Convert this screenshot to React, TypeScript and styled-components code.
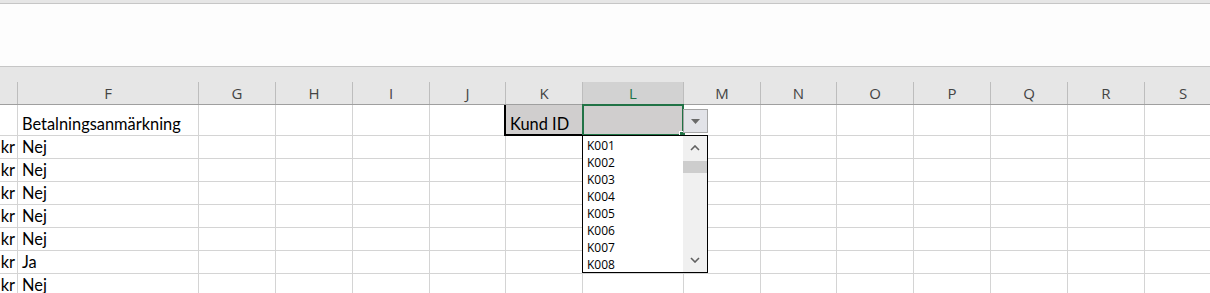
import React from "react";
import styled, { createGlobalStyle } from "styled-components";

const GlobalStyle = createGlobalStyle`
	html, body {
		margin: 0;
		padding: 0;
		background: #ffffff;
		overflow: hidden;
	}
	#root {
		width: 1210px;
		height: 293px;
		overflow: hidden;
	}
`;

const columns = [
	{ key: "E", width: 18 },
	{ key: "F", width: 181 },
	{ key: "G", width: 77 },
	{ key: "H", width: 77 },
	{ key: "I", width: 77 },
	{ key: "J", width: 76 },
	{ key: "K", width: 77 },
	{ key: "L", width: 101 },
	{ key: "M", width: 77 },
	{ key: "N", width: 76 },
	{ key: "O", width: 77 },
	{ key: "P", width: 77 },
	{ key: "Q", width: 77 },
	{ key: "R", width: 77 },
	{ key: "S", width: 77 }
];

const answers = ["Nej", "Nej", "Nej", "Nej", "Nej", "Ja", "Nej"];
const customers = ["K001", "K002", "K003", "K004", "K005", "K006", "K007", "K008"];

const Window = styled.div`
	width: 1210px;
	height: 293px;
	overflow: hidden;
	display: flex;
	flex-direction: column;
`;

const TopStrip = styled.div`
	flex: none;
	height: 3px;
	background: #e6e6e6;
	border-bottom: 1px solid #c6c6c6;
`;

const FormulaArea = styled.div`
	flex: none;
	height: 62px;
	background: #fdfdfd;
	border-bottom: 1px solid #c6c6c6;
`;

const Sheet = styled.div`
	display: grid;
	grid-template-columns: ${columns.map((c) => c.width + "px").join(" ")};
	grid-template-rows: 38px 31px;
	grid-auto-rows: 23px;
	font-family: Lato, "Noto Sans", sans-serif;
	font-size: 16.4px;
	color: #000;
`;

const HeaderCell = styled.div`
	background: #e6e6e6;
	border-bottom: 1px solid #9f9f9f;
	padding-top: 15px;
	box-sizing: border-box;
	display: flex;
`;

const HeaderLabel = styled.div<{ $active?: boolean }>`
	flex: 1;
	display: flex;
	align-items: center;
	justify-content: center;
	border-right: 1px solid #bdbdbd;
	background: ${(p) => (p.$active ? "#d2d2d2" : "transparent")};
	color: ${(p) => (p.$active ? "#217346" : "#444444")};
	font-family: "Open Sans", "Noto Sans", sans-serif;
	font-size: 15px;
`;

const Cell = styled.div<{ $align?: "left" | "right" }>`
	position: relative;
	box-sizing: border-box;
	border-right: 1px solid #d4d4d4;
	border-bottom: 1px solid #d4d4d4;
	display: flex;
	align-items: flex-end;
	justify-content: ${(p) => (p.$align === "right" ? "flex-end" : "flex-start")};
	padding: 0 ${(p) => (p.$align === "right" ? "2px" : "3px")} 1px 4px;
	line-height: 20px;
	white-space: nowrap;
`;

const LabelCell = styled(Cell)`
	background: #d0cece;
	&::after {
		content: "";
		position: absolute;
		left: -2px;
		top: 0;
		right: 0;
		bottom: -1px;
		border-left: 2px solid #000;
		border-bottom: 2px solid #000;
		pointer-events: none;
	}
`;

const ActiveCell = styled(Cell)`
	background: #d0cece;
	overflow: visible;
	z-index: 2;
`;

const SelectionFrame = styled.div`
	position: absolute;
	left: -1px;
	top: -1px;
	width: 102px;
	height: 32px;
	box-sizing: border-box;
	border: 2px solid #217346;
	pointer-events: none;
`;

const FillHandle = styled.div`
	position: absolute;
	right: -3px;
	bottom: -3px;
	width: 5px;
	height: 5px;
	background: #217346;
	border-left: 1px solid #fff;
	border-top: 1px solid #fff;
`;

const DropButton = styled.div`
	position: absolute;
	left: 100px;
	top: 4px;
	width: 25px;
	height: 24px;
	box-sizing: border-box;
	background: #e2e3e8;
	border: 1px solid #a6a6a6;
	display: flex;
	align-items: center;
	justify-content: center;
`;

const DropList = styled.div`
	position: absolute;
	left: -1px;
	top: 30px;
	width: 126px;
	height: 138px;
	box-sizing: border-box;
	background: #fff;
	border: 1px solid #000;
	display: flex;
`;

const Items = styled.div`
	flex: 1;
	padding: 1px 0 0 4px;
	font-family: "Open Sans", "Noto Sans", sans-serif;
	font-size: 12px;
	line-height: 17px;
	color: #000;
`;

const Scrollbar = styled.div`
	flex: none;
	width: 24px;
	background: #f0f0f0;
	display: flex;
	flex-direction: column;
`;

const ScrollArrow = styled.div`
	height: 24px;
	display: flex;
	align-items: center;
	justify-content: center;
`;

const Thumb = styled.div`
	margin-top: 1px;
	height: 12px;
	background: #cdcdcd;
`;

const Track = styled.div`
	flex: 1;
`;

const Chevron = ({ up }: { up?: boolean }) => (
	<svg width="10" height="6" viewBox="0 0 10 6">
		<polyline points={up ? "1,5 5,1 9,5" : "1,1 5,5 9,1"} fill="none" stroke="#606060" strokeWidth="1.6" />
	</svg>
);

const Triangle = () => (
	<svg width="9" height="5" viewBox="0 0 9 5">
		<polygon points="0,0 9,0 4.5,5" fill="#6a6a6a" />
	</svg>
);

const App = () => {
	const renderRow = (i: number) =>
		columns.map((c) => {
			if (c.key === "E") return <Cell key={c.key} $align="right">kr</Cell>;
			if (c.key === "F") return <Cell key={c.key}>{answers[i]}</Cell>;
			return <Cell key={c.key} />;
		});

	return (
		<Window>
			<GlobalStyle />
			<TopStrip />
			<FormulaArea />
			<Sheet>
				{columns.map((c) => (
					<HeaderCell key={c.key}>
						<HeaderLabel $active={c.key === "L"}>{c.key === "E" ? "" : c.key}</HeaderLabel>
					</HeaderCell>
				))}
				{columns.map((c) => {
					if (c.key === "F") return <Cell key={c.key}>Betalningsanmärkning</Cell>;
					if (c.key === "K") return <LabelCell key={c.key}>Kund ID</LabelCell>;
					if (c.key === "L")
						return (
							<ActiveCell key={c.key}>
								<SelectionFrame>
									<FillHandle />
								</SelectionFrame>
								<DropButton>
									<Triangle />
								</DropButton>
								<DropList>
									<Items>
										{customers.map((k) => (
											<div key={k}>{k}</div>
										))}
									</Items>
									<Scrollbar>
										<ScrollArrow>
											<Chevron up />
										</ScrollArrow>
										<Thumb />
										<Track />
										<ScrollArrow>
											<Chevron />
										</ScrollArrow>
									</Scrollbar>
								</DropList>
							</ActiveCell>
						);
					return <Cell key={c.key} />;
				})}
				{answers.map((_, i) => renderRow(i))}
			</Sheet>
		</Window>
	);
};

export default App;
